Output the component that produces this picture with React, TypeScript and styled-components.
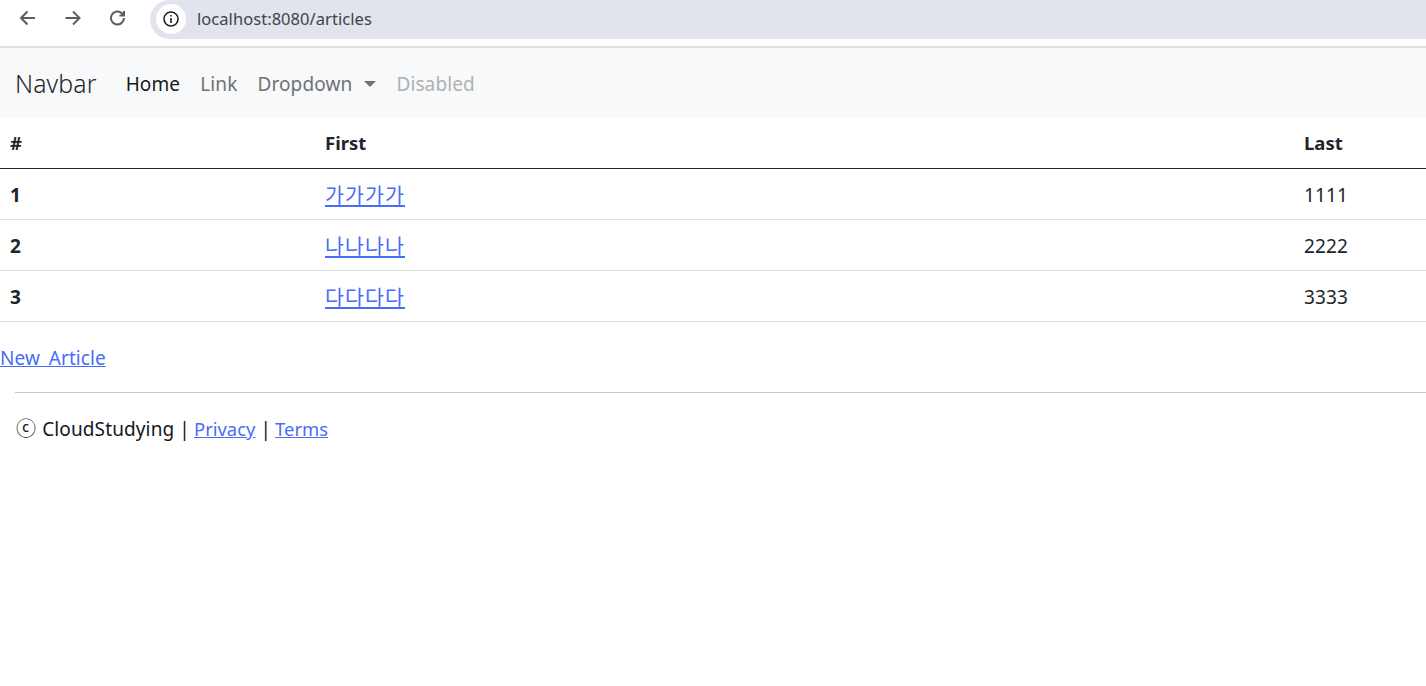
import React from "react";
import styled, { createGlobalStyle } from "styled-components";

const Global = createGlobalStyle`
  html, body { margin: 0; padding: 0; background: #fff; }
  body {
    font-family: "Noto Sans", "Noto Sans CJK KR", sans-serif;
    font-size: 19px;
    letter-spacing: 0.12px;
    line-height: 1.5;
    color: #212529;
  }
  a { color: #4a6cf7; }
`;

const ChromeBar = styled.div`
  display: flex;
  align-items: flex-start;
  height: 46px;
  border-bottom: 2px solid #e0e0e3;
  background: #fff;
`;
const NavButtons = styled.div`
  display: flex;
  gap: 21px;
  padding: 6px 0 0 16px;
  width: 134px;
  box-sizing: border-box;
`;
const IconSlot = styled.svg`
  width: 24px;
  height: 24px;
  display: block;
  fill: none;
  stroke: #5b5e63;
  stroke-width: 2;
`;
const Omnibox = styled.div`
  flex: 1;
  height: 39px;
  margin-left: 16px;
  display: flex;
  align-items: center;
  gap: 11px;
  padding-left: 6px;
  padding-bottom: 1px;
  box-sizing: border-box;
  background: #e1e4ec;
  border-radius: 20px 0 0 20px;
  color: #40434a;
  font-size: 16.5px;
  letter-spacing: 0.05px;
`;
const InfoChip = styled.span`
  width: 30px;
  height: 30px;
  border-radius: 50%;
  background: #fff;
  display: flex;
  align-items: center;
  justify-content: center;
`;
const Navbar = styled.nav`
  display: flex;
  align-items: center;
  height: 70px;
  box-sizing: border-box;
  padding: 2px 0 0 15px;
  background: #f8f9fa;
`;
const Brand = styled.span`
  font-size: 24.8px;
  color: #212529;
  margin-right: 19px;
  font-weight: 300;
`;
const NavLink = styled.span<{ $tone: "active" | "normal" | "disabled" }>`
  padding: 0 10px;
  color: ${(p) => (p.$tone === "active" ? "#15171a" : p.$tone === "normal" ? "#6f7275" : "#aeb1b3")};
  display: inline-flex;
  align-items: center;
`;
const Caret = styled.span`
  display: inline-block;
  margin-left: 12px;
  border-top: 6px solid #6f7275;
  border-left: 6px solid transparent;
  border-right: 6px solid transparent;
`;
const Table = styled.table`
  width: 100%;
  table-layout: fixed;
  border-collapse: collapse;
`;
const Th = styled.th<{ $w?: number }>`
  text-align: left;
  font-weight: 700;
  font-size: 18.5px;
  letter-spacing: 0;
  height: 50px;
  padding: 0 10px;
  box-sizing: border-box;
  border-bottom: 1px solid #212529;
  width: ${(p) => (p.$w ? `${p.$w}px` : "auto")};
`;
const Td = styled.td<{ $bold?: boolean }>`
  height: 51px;
  padding: 4px 10px 0;
  box-sizing: border-box;
  border-bottom: 1px solid #dee2e6;
  font-weight: ${(p) => (p.$bold ? 700 : 400)};
`;
const ArticleLink = styled.a`
  font-family: "Noto Sans CJK KR", sans-serif;
  font-size: 20.5px;
  letter-spacing: 1.14px;
  vertical-align: 2px;
`;
const NewArticle = styled.a`
  display: block;
  width: fit-content;
  margin: 23px 0 0;
  line-height: 27px;
  word-spacing: 4px;
  letter-spacing: 0.05px;
`;
const Rule = styled.hr`
  margin: 20px 0 0 15px;
  border: 0;
  border-top: 1px solid #c8c8c8;
`;
const Footer = styled.footer`
  padding: 21px 0 0 16px;
  line-height: 27px;
  color: #15171a;
`;
const FooterLink = styled.a`
  font-size: 18.4px;
  letter-spacing: 0;
  margin-left: -1px;
`;
const CopyMark = styled.span`
  font-family: "Noto Sans CJK KR", sans-serif;
  font-size: 20px;
  margin-right: 1px;
`;

const rows = [
  ["1", "가가가가", "1111"],
  ["2", "나나나나", "2222"],
  ["3", "다다다다", "3333"],
];

export default function App() {
  return (
    <>
      <Global />
      <ChromeBar>
        <NavButtons>
          <IconSlot viewBox="0 0 24 24"><path d="M19 12H6M11.5 5.5L5 12l6.5 6.5" /></IconSlot>
          <IconSlot viewBox="0 0 24 24"><path d="M4.5 12h13M12 5.5l6.5 6.5-6.5 6.5" /></IconSlot>
          <IconSlot viewBox="0 0 24 24"><path d="M18 12a6.5 6.5 0 1 1-2-4.7L18 9.5M18 5v4.5h-4.5" /></IconSlot>
        </NavButtons>
        <Omnibox>
          <InfoChip>
            <svg width="18" height="18" viewBox="0 0 18 18" fill="none" stroke="#222" strokeWidth="1.6">
              <circle cx="9" cy="9" r="7" />
              <path d="M9 8v5M9 5v1.6" />
            </svg>
          </InfoChip>
          <span>localhost:8080/articles</span>
        </Omnibox>
      </ChromeBar>
      <Navbar>
        <Brand>Navbar</Brand>
        <NavLink $tone="active">Home</NavLink>
        <NavLink $tone="normal">Link</NavLink>
        <NavLink $tone="normal">Dropdown<Caret /></NavLink>
        <NavLink $tone="disabled">Disabled</NavLink>
      </Navbar>
      <Table>
        <thead>
          <tr>
            <Th $w={315}>#</Th>
            <Th>First</Th>
            <Th $w={132}>Last</Th>
          </tr>
        </thead>
        <tbody>
          {rows.map(([n, f, l]) => (
            <tr key={n}>
              <Td $bold>{n}</Td>
              <Td><ArticleLink href="#">{f}</ArticleLink></Td>
              <Td>{l}</Td>
            </tr>
          ))}
        </tbody>
      </Table>
      <NewArticle href="#">New Article</NewArticle>
      <Rule />
      <Footer>
        <CopyMark>ⓒ</CopyMark> CloudStudying | <FooterLink href="#">Privacy</FooterLink> | <FooterLink href="#">Terms</FooterLink>
      </Footer>
    </>
  );
}
